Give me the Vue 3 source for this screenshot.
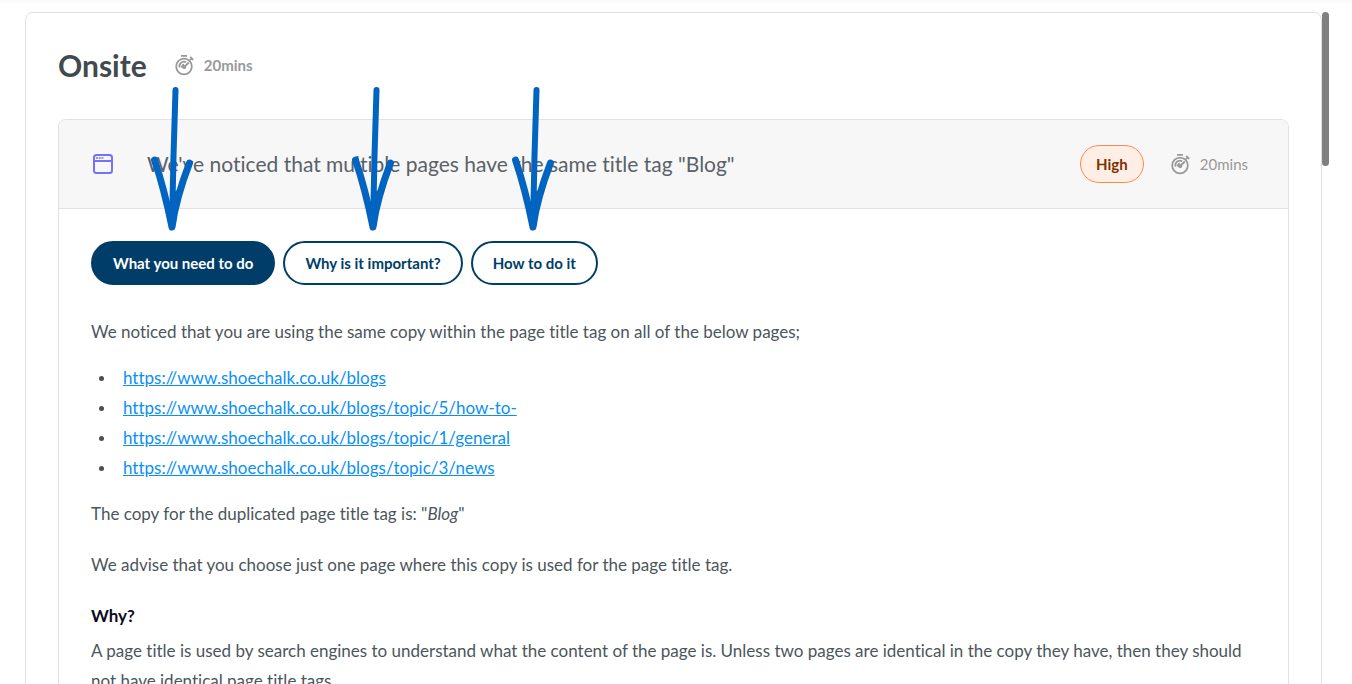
<script setup>
import { ref } from 'vue'

const tabs = ['What you need to do', 'Why is it important?', 'How to do it']
const active = ref(0)
const links = [
  'https://www.shoechalk.co.uk/blogs',
  'https://www.shoechalk.co.uk/blogs/topic/5/how-to-',
  'https://www.shoechalk.co.uk/blogs/topic/1/general',
  'https://www.shoechalk.co.uk/blogs/topic/3/news',
]
const arrows = ['first', 'second', 'third']
</script>

<template>
  <div class="page">
    <main class="panel">
      <header class="panel-head">
        <h1>Onsite</h1>
        <span class="time strong">
          <svg class="watch" viewBox="0 0 20 22" aria-hidden="true">
            <circle cx="9" cy="12.5" r="7.8" />
            <path d="M6 1.800h6M15.200 2.800l3 3M14.800 6.200l2-2M4.600 13.500a4.600 4.600 0 0 1 6.600-5.300M6.900 13.500a2.400 2.400 0 0 1 2.200-2.800M9.300 13l4.500-4.500" />
            <circle class="hub" cx="9.200" cy="13.200" r="1.900" />
          </svg>
          20mins
        </span>
      </header>

      <article class="task">
        <header class="task-head">
          <svg class="window" viewBox="0 0 20 20" aria-hidden="true">
            <rect x="1" y="1" width="18" height="18" rx="2.5" />
            <path d="M1 7h18" />
            <path class="dots" d="M3 4h2M5.700 4h2M8.400 4h2" />
          </svg>
          <h2>We've noticed that multiple pages have the same title tag "Blog"</h2>
          <span class="badge">High</span>
          <span class="time">
            <svg class="watch" viewBox="0 0 20 22" aria-hidden="true">
              <circle cx="9" cy="12.5" r="7.8" />
              <path d="M6 1.800h6M15.200 2.800l3 3M14.800 6.200l2-2M4.600 13.500a4.600 4.600 0 0 1 6.600-5.300M6.900 13.500a2.400 2.400 0 0 1 2.200-2.800M9.300 13l4.500-4.500" />
              <circle class="hub" cx="9.200" cy="13.200" r="1.900" />
            </svg>
            20mins
          </span>
        </header>

        <div class="task-body">
          <div class="tabs">
            <button
              v-for="(tab, i) in tabs"
              :key="tab"
              type="button"
              :class="{ active: active === i }"
              :aria-pressed="active === i"
              @click="active = i"
            >{{ tab }}</button>
          </div>
          <p>We noticed that you are using the same copy within the page title tag on all of the below pages;</p>
          <ul>
            <li v-for="link in links" :key="link"><a :href="link">{{ link }}</a></li>
          </ul>
          <p>The copy for the duplicated page title tag is: "<em>Blog</em>"</p>
          <p class="spaced">We advise that you choose just one page where this copy is used for the page title tag.</p>
          <h3>Why?</h3>
          <p>A page title is used by search engines to understand what the content of the page is. Unless two pages are identical in the copy they have, then they should not have identical page title tags.</p>
        </div>
      </article>
    </main>
    <div class="thumb"></div>

    <svg v-for="name in arrows" :key="name" class="arrow" :class="name" viewBox="0 0 44 146" aria-hidden="true">
      <path class="shaft" d="M25.500 4L23.500 70L22 141" />
      <path d="M4.500 74Q14 102 22 141Q26 112 39.500 77" />
      <path class="tip" d="M17 114L22 141L31 101L24.500 108L22 124Z" />
    </svg>
  </div>
</template>

<style>
body {
  margin: 0;
  background: #fff;
}
</style>

<style scoped>
.page {
  position: relative;
  box-sizing: border-box;
  display: flex;
  align-items: flex-start;
  height: 100vh;
  overflow: hidden;
  padding: 12px 23px 0 25px;
  background: linear-gradient(#f9f9f9, #fff 4px);
  font-family: Lato, "Liberation Sans", sans-serif;
  font-variant-ligatures: none;
  color: #4b565c;
}
.panel {
  box-sizing: border-box;
  flex: 1;
  min-width: 0;
  padding: 32px;
  border: 1px solid #dfe2e4;
  border-radius: 8px;
}
.thumb {
  width: 7px;
  height: 154px;
  border-radius: 4px;
  background: #808080;
}
.panel-head {
  display: flex;
  align-items: center;
  gap: 28px;
  height: 40px;
  margin-bottom: 34px;
}
h1 {
  margin: 0;
  font-size: 30px;
  line-height: 40px;
  font-weight: 700;
  color: #434a4d;
}
.time {
  display: flex;
  align-items: center;
  gap: 9px;
  font-size: 15px;
  line-height: 22px;
  color: #999;
}
.time.strong {
  font-weight: 700;
}
.watch {
  width: 20px;
  height: 22px;
  fill: none;
  stroke: #999;
  stroke-width: 1.8;
}
.watch .hub {
  fill: #999;
  stroke: none;
}
.task {
  border: 1px solid #dfe2e4;
  border-radius: 8px;
}
.task-head {
  display: flex;
  align-items: center;
  height: 88px;
  padding: 0 40px 0 34px;
  border-bottom: 1px solid #dfe2e4;
  border-radius: 7px 7px 0 0;
  background: #f7f7f7;
}
.window {
  width: 20px;
  height: 20px;
  fill: none;
  stroke: #7571f9;
  stroke-width: 2;
}
.window .dots {
  stroke-width: 1.6;
}
h2 {
  flex: 1;
  margin: 0 0 0 34px;
  font-size: 21px;
  line-height: 30px;
  font-weight: 400;
  color: #5a6268;
}
.badge {
  box-sizing: border-box;
  width: 64px;
  height: 38px;
  margin-right: 27px;
  border: 1px solid #ff8a50;
  border-radius: 19px;
  background: #ffeee6;
  color: #7a3300;
  font-size: 15px;
  line-height: 36px;
  font-weight: 700;
  text-align: center;
}
.task-body {
  padding: 32px;
}
.tabs {
  display: flex;
  gap: 8px;
  margin-bottom: 32px;
}
button {
  height: 44px;
  padding: 0 20px;
  border: 2px solid #003d68;
  border-radius: 22px;
  background: #fff;
  color: #003d68;
  font-family: inherit;
  font-size: 15px;
  font-weight: 700;
}
button.active {
  background: #003d68;
  color: #fff;
}
p {
  margin: 0;
  font-size: 17px;
  line-height: 30px;
}
ul {
  margin: 16px 0;
  padding-left: 8px;
  list-style: none;
  font-size: 17px;
  line-height: 30px;
}
li {
  display: flex;
  align-items: center;
  gap: 19px;
}
li::before {
  content: "";
  width: 5px;
  height: 5px;
  border-radius: 50%;
  background: #4b4f54;
}
a {
  color: #0a90f5;
  text-decoration: underline;
}
.spaced {
  margin: 21px 0;
}
h3 {
  margin: 0 0 5px;
  font-size: 17px;
  line-height: 30px;
  font-weight: 700;
  color: #0a0a23;
}
.arrow {
  position: absolute;
  top: 86px;
  width: 44px;
  height: 146px;
  fill: none;
  stroke: #0064c0;
  stroke-width: 7;
  stroke-linecap: round;
  stroke-linejoin: round;
}
.arrow .shaft {
  stroke-width: 6;
}
.arrow .tip {
  fill: #0064c0;
  stroke-width: 2;
}
.first {
  left: 150px;
}
.second {
  left: 351px;
}
.third {
  left: 511px;
}
</style>
